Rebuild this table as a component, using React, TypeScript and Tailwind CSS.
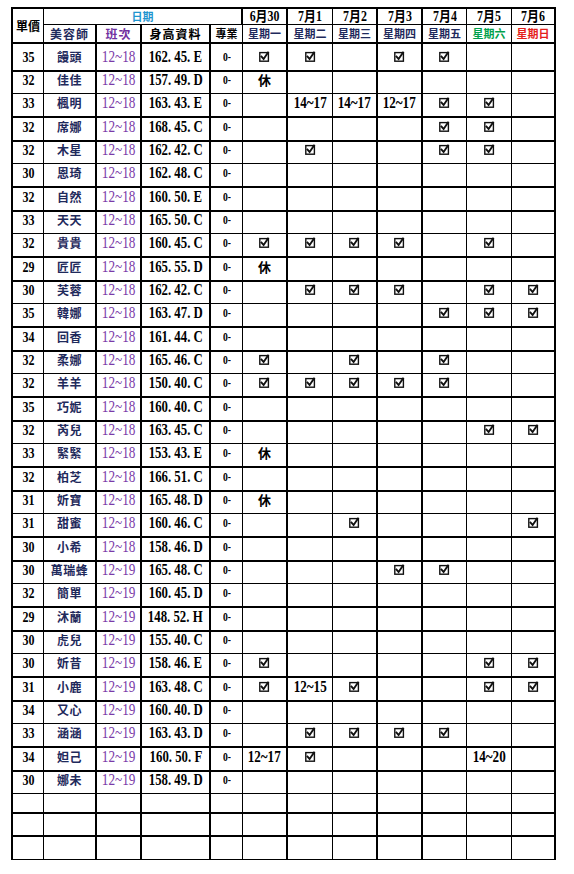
import React from "react"
import clsx from "clsx"

type Mark = "" | "v" | string

type Row = {
  price?: number
  name?: string
  shift?: string
  info?: string
  days: Mark[]
}

const e: Mark[] = ["", "", "", "", "", "", ""]

const rows: Row[] = [
  { price: 35, name: "饅頭", shift: "12~18", info: "162. 45. E", days: ["v", "v", "", "v", "v", "", ""] },
  { price: 32, name: "佳佳", shift: "12~18", info: "157. 49. D", days: ["休", "", "", "", "", "", ""] },
  { price: 33, name: "楓明", shift: "12~18", info: "163. 43. E", days: ["", "14~17", "14~17", "12~17", "v", "v", ""] },
  { price: 32, name: "席娜", shift: "12~18", info: "168. 45. C", days: ["", "", "", "", "v", "v", ""] },
  { price: 32, name: "木星", shift: "12~18", info: "162. 42. C", days: ["", "v", "", "", "v", "v", ""] },
  { price: 30, name: "恩琦", shift: "12~18", info: "162. 48. C", days: e },
  { price: 32, name: "自然", shift: "12~18", info: "160. 50. E", days: e },
  { price: 33, name: "天天", shift: "12~18", info: "165. 50. C", days: e },
  { price: 32, name: "貴貴", shift: "12~18", info: "160. 45. C", days: ["v", "v", "v", "v", "", "v", ""] },
  { price: 29, name: "匠匠", shift: "12~18", info: "165. 55. D", days: ["休", "", "", "", "", "", ""] },
  { price: 30, name: "芙蓉", shift: "12~18", info: "162. 42. C", days: ["", "v", "v", "v", "", "v", "v"] },
  { price: 35, name: "韓娜", shift: "12~18", info: "163. 47. D", days: ["", "", "", "", "v", "v", "v"] },
  { price: 34, name: "回香", shift: "12~18", info: "161. 44. C", days: e },
  { price: 32, name: "柔娜", shift: "12~18", info: "165. 46. C", days: ["v", "", "v", "", "v", "", ""] },
  { price: 32, name: "羊羊", shift: "12~18", info: "150. 40. C", days: ["v", "v", "v", "v", "v", "", ""] },
  { price: 35, name: "巧妮", shift: "12~18", info: "160. 40. C", days: e },
  { price: 32, name: "芮兒", shift: "12~18", info: "163. 45. C", days: ["", "", "", "", "", "v", "v"] },
  { price: 33, name: "緊緊", shift: "12~18", info: "153. 43. E", days: ["休", "", "", "", "", "", ""] },
  { price: 32, name: "柏芝", shift: "12~18", info: "166. 51. C", days: e },
  { price: 31, name: "妡寶", shift: "12~18", info: "165. 48. D", days: ["休", "", "", "", "", "", ""] },
  { price: 31, name: "甜蜜", shift: "12~18", info: "160. 46. C", days: ["", "", "v", "", "", "", "v"] },
  { price: 30, name: "小希", shift: "12~18", info: "158. 46. D", days: e },
  { price: 30, name: "萬瑞蜂", shift: "12~19", info: "165. 48. C", days: ["", "", "", "v", "v", "", ""] },
  { price: 32, name: "簡單", shift: "12~19", info: "160. 45. D", days: e },
  { price: 29, name: "沐蘭", shift: "12~19", info: "148. 52. H", days: e },
  { price: 30, name: "虎兒", shift: "12~19", info: "155. 40. C", days: e },
  { price: 30, name: "妡昔", shift: "12~19", info: "158. 46. E", days: ["v", "", "", "", "", "v", "v"] },
  { price: 31, name: "小鹿", shift: "12~19", info: "163. 48. C", days: ["v", "12~15", "v", "", "", "v", "v"] },
  { price: 34, name: "又心", shift: "12~19", info: "160. 40. D", days: e },
  { price: 33, name: "涵涵", shift: "12~19", info: "163. 43. D", days: ["", "v", "v", "v", "v", "", ""] },
  { price: 34, name: "妲己", shift: "12~19", info: "160. 50. F", days: ["12~17", "v", "", "", "", "14~20", ""] },
  { price: 30, name: "娜未", shift: "12~19", info: "158. 49. D", days: e },
  { days: e },
  { days: e },
  { days: e },
]

const dates = ["6月30", "7月1", "7月2", "7月3", "7月4", "7月5", "7月6"]
const weekdays = ["星期一", "星期二", "星期三", "星期四", "星期五", "星期六", "星期日"]

// right border width per column (the scan mixes 1px and 2px lines)
const rb = [
  "border-r",
  "border-r-2",
  "border-r-2",
  "border-r-2",
  "border-r",
  "border-r-2",
  "border-r",
  "border-r-2",
  "border-r-2",
  "border-r",
  "border-r",
  "border-r-2",
]

const grid =
  "grid grid-cols-[31px_53px_45px_69px_32px_45px_45px_45px_45px_44px_45px_44px]"

const serif = "font-['Liberation_Serif','Noto_Sans_CJK_TC',serif]"
const cjk = "font-['Noto_Sans_CJK_TC','Noto_Sans_CJK_SC',sans-serif]"

function Check() {
  return (
    <svg width="11" height="11" viewBox="0 0 11 11" className="block">
      <rect x="0.8" y="1.6" width="8.6" height="8.6" fill="none" stroke="#111" strokeWidth="1.4" />
      <path d="M2.5 5.6 L4.6 8 L9 1.6" fill="none" stroke="#111" strokeWidth="1.9" strokeLinecap="square" />
    </svg>
  )
}

function DayCell({ v }: { v: Mark }) {
  if (v === "v") return <Check />
  if (v === "休") return <span className={clsx(cjk, "text-[13px] font-bold text-black")}>休</span>
  if (!v) return null
  return (
    <span className={clsx(serif, "inline-block scale-x-[0.82] text-[16px] font-bold text-black")}>
      {v}
    </span>
  )
}

export default function App() {
  return (
    <div className="min-h-[874px] w-[574px] bg-white pt-[7px] pl-[11px]">
      <div className="w-[545px] border-l-2 border-t-2 border-black">
        {/* header */}
        <div className={clsx(grid, "grid-rows-[16px_19px]")}>
          <div className={clsx("row-span-2 flex items-center justify-center border-b-2 border-black", rb[0])}>
            <span className={clsx(cjk, "text-[12px] font-bold text-black")}>單價</span>
          </div>
          <div className="col-span-4 flex items-center justify-center border-b border-r-2 border-black">
            <span className={clsx(cjk, "text-[11px] font-bold text-[#1f95cf]")}>日期</span>
          </div>
          {dates.map((d, i) => (
            <div key={d} className={clsx("flex items-center justify-center border-b border-black", rb[i + 5])}>
              <span className={clsx(serif, "inline-block scale-x-[0.85] text-[14px] font-bold text-black")}>{d}</span>
            </div>
          ))}
          <div className={clsx("flex items-center justify-center border-b-2 border-black", rb[1])}>
            <span className={clsx(cjk, "text-[12px] font-semibold tracking-[1px] text-[#1f2a5c]")}>美容師</span>
          </div>
          <div className={clsx("flex items-center justify-center border-b-2 border-black", rb[2])}>
            <span className={clsx(cjk, "text-[12px] font-semibold tracking-[1px] text-[#7030a0]")}>班次</span>
          </div>
          <div className={clsx("flex items-center justify-center border-b-2 border-black", rb[3])}>
            <span className={clsx(cjk, "text-[12px] font-semibold tracking-[1px] text-black")}>身高資料</span>
          </div>
          <div className={clsx("flex items-center justify-center border-b-2 border-black", rb[4])}>
            <span className={clsx(cjk, "text-[11px] font-semibold text-black")}>專業</span>
          </div>
          {weekdays.map((w, i) => (
            <div key={w} className={clsx("flex items-center justify-center border-b-2 border-black", rb[i + 5])}>
              <span
                className={clsx(
                  cjk,
                  "text-[11px] font-semibold",
                  i === 5 ? "text-[#00a14b]" : i === 6 ? "text-[#e5201b]" : "text-[#1f2a5c]"
                )}
              >
                {w}
              </span>
            </div>
          ))}
        </div>

        {/* rows */}
        {rows.map((r, ri) => {
          const h = ri % 3 === 2 ? "h-[24px]" : "h-[23px]"
          const bb = ri % 3 === 1 ? "border-b" : "border-b-2"
          const cell = (i: number) => clsx("flex items-center justify-center border-black", rb[i], bb)
          return (
            <div key={ri} className={clsx(grid, h)}>
              <div className={cell(0)}>
                {r.price && (
                  <span className={clsx(serif, "inline-block scale-x-[0.8] text-[15px] font-bold text-black")}>
                    {r.price}
                  </span>
                )}
              </div>
              <div className={cell(1)}>
                {r.name && (
                  <span className={clsx(cjk, "text-[12px] font-semibold tracking-[0.5px] text-[#1f2a5c]")}>{r.name}</span>
                )}
              </div>
              <div className={cell(2)}>
                {r.shift && (
                  <span className={clsx(serif, "inline-block scale-x-[0.78] text-[17px] text-[#7a3aa8]")}>
                    {r.shift}
                  </span>
                )}
              </div>
              <div className={cell(3)}>
                {r.info && (
                  <span className={clsx(serif, "inline-block scale-x-[0.8] whitespace-pre text-[16px] font-bold text-black")}>
                    {r.info}
                  </span>
                )}
              </div>
              <div className={cell(4)}>
                {r.info && (
                  <span className={clsx(serif, "inline-block scale-x-[0.8] text-[12px] font-bold text-black")}>0-</span>
                )}
              </div>
              {r.days.map((d, di) => (
                <div key={di} className={cell(di + 5)}>
                  <DayCell v={d} />
                </div>
              ))}
            </div>
          )
        })}
      </div>
    </div>
  )
}
